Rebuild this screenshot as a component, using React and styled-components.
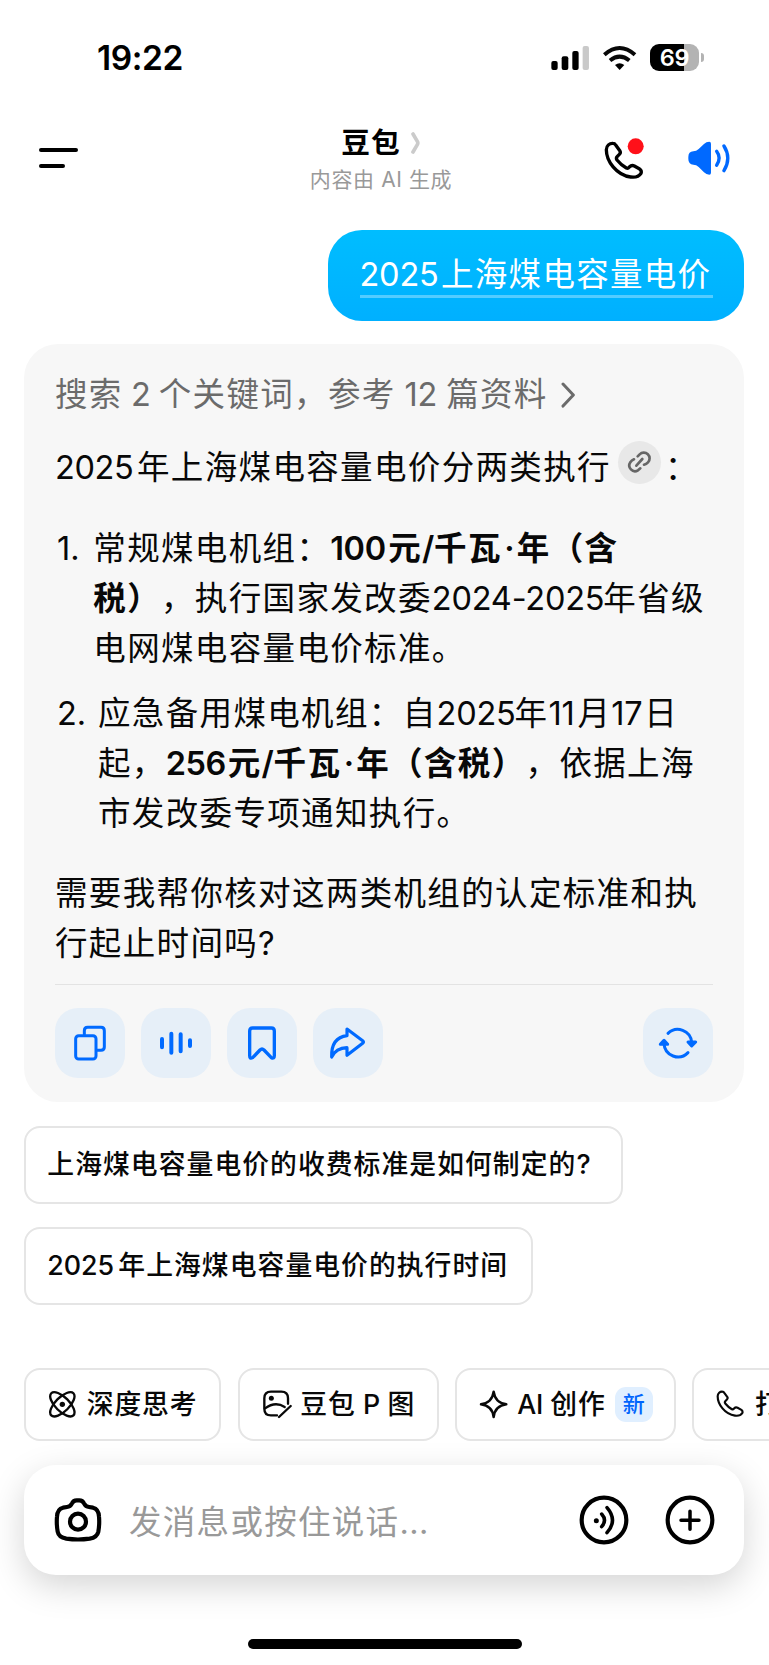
import React from "react";
import styled, { createGlobalStyle } from "styled-components";

const Global = createGlobalStyle`
  * { box-sizing: border-box; }
  body { margin: 0; background: #fff; }
  svg { display: block; flex: none; }
`;

const Screen = styled.main`
  width: 769px;
  height: 1665px;
  overflow: hidden;
  background: #fff;
  color: #080808;
  font-family: Inter, "Noto Sans CJK SC", sans-serif;
  display: flex;
  flex-direction: column;
`;

const StatusBar = styled.header`
  height: 115px;
  padding: 0 65.5px 0 97px;
  display: flex;
  justify-content: space-between;
  align-items: center;
`;

const Clock = styled.time`
  font-size: 33.5px;
  line-height: 40px;
  font-weight: 600;
  letter-spacing: -0.4px;
  color: #000;
`;

const StatusIcons = styled.div`
  display: flex;
  align-items: center;
  gap: 13.3px;
`;

const Battery = styled.div`
  display: flex;
  align-items: center;
  gap: 1.5px;
`;

const BatteryBody = styled.div`
  width: 49px;
  height: 27px;
  border-radius: 9px;
  background: linear-gradient(90deg, #000 69.5%, #b3b3b3 69.5%);
  color: #fff;
  font-size: 23.5px;
  font-weight: 600;
  line-height: 27px;
  text-align: center;
  letter-spacing: -0.3px;
`;

const BatteryNub = styled.div`
  width: 3px;
  height: 9px;
  border-radius: 0 4px 4px 0;
  background: #b3b3b3;
`;

const NavBar = styled.nav`
  height: 115px;
  padding: 0 39px 0 39px;
  display: grid;
  grid-template-columns: 171px 1fr 171px;
`;

const MenuButton = styled.div`
  display: flex;
  flex-direction: column;
  gap: 11.5px;
  padding-top: 33.3px;
`;

const MenuLine = styled.span`
  width: ${(p) => p.$w}px;
  height: 4.2px;
  border-radius: 3px;
  background: #000;
`;

const TitleBlock = styled.div`
  display: flex;
  flex-direction: column;
  align-items: center;
  padding: 10px 7px 0 0;
`;

const Title = styled.h1`
  margin: 0;
  display: flex;
  align-items: center;
  font-size: 28.7px;
  line-height: 36px;
  font-weight: 700;
  letter-spacing: 1px;
  gap: 10px;
  color: #000;
`;

const Subtitle = styled.div`
  margin-top: 4px;
  font-size: 21px;
  line-height: 30px;
  letter-spacing: 0.6px;
  color: #999;
  white-space: nowrap;
`;

const NavActions = styled.div`
  display: flex;
  justify-content: flex-end;
  align-items: flex-start;
  gap: 41.5px;
  padding-top: 23px;
`;

const Bubble = styled.div`
  align-self: flex-end;
  flex: none;
  margin-right: 25px;
  width: 416px;
  height: 90.5px;
  padding: 20px 31.5px 0;
  border-radius: 34px;
  background: linear-gradient(#00bdff, #00b0ff);
  color: #fff;
`;

const BubbleText = styled.div`
  height: 48px;
  border-bottom: 3px solid rgba(255, 255, 255, 0.33);
  font-size: 32.5px;
  line-height: 50px;
  letter-spacing: 1.3px;
  white-space: nowrap;
`;

const Card = styled.article`
  flex: none;
  margin: 23.5px 25px 0 24px;
  height: 758px;
  padding: 25.7px 31px 0;
  border-radius: 34px;
  background: #f7f7f7;
`;

const Line = styled.div`
  height: 50px;
  display: flex;
  font-size: 32.5px;
  line-height: 50px;
  letter-spacing: 1.35px;
  white-space: pre;
`;

const SearchLine = styled(Line)`
  color: #6b6b6b;
  align-items: center;
`;

const Latin = styled.span`
  display: inline-block;
  width: ${(p) => p.$w}px;
  text-align: ${(p) => p.$align || "left"};
  letter-spacing: ${(p) => p.$ls ?? -0.2}px;
  white-space: pre;
`;

const Strong = styled.strong`
  font-weight: 600;
`;

const LinkBadge = styled.span`
  width: 43px;
  height: 43px;
  margin: -2px 4px 0 7px;
  border-radius: 50%;
  background: #e8e8e8;
`;

const Paragraph = styled.div`
  margin-top: ${(p) => p.$top}px;
`;

const ListItem = styled.div`
  margin-top: ${(p) => p.$top}px;
  display: grid;
  grid-template-columns: ${(p) => p.$indent}px 1fr;
`;

const Marker = styled(Line)`
  padding-left: 2px;
  letter-spacing: 0;
`;

const Actions = styled.footer`
  margin-top: 14.8px;
  padding-top: 23.5px;
  border-top: 1px solid #e3e3e3;
  display: flex;
  gap: 16px;
`;

const ActionButton = styled.div`
  width: 70px;
  height: 70px;
  border-radius: 23px;
  background: #e6eff8;
  color: #006aff;
  margin-left: ${(p) => (p.$end ? "auto" : 0)};
`;

const Suggestions = styled.section`
  margin: 24px 0 0 24px;
  display: flex;
  flex-direction: column;
  align-items: flex-start;
  gap: 23.5px;
`;

const Suggestion = styled.div`
  width: ${(p) => p.$w}px;
  height: 77.5px;
  padding-left: 21.3px;
  border: 2px solid #e5e5e5;
  border-radius: 16px;
  font-size: 26.8px;
  line-height: 73px;
  font-weight: 500;
  letter-spacing: 1.05px;
  white-space: nowrap;
`;

const Tools = styled.section`
  margin: 63px 0 0 24px;
  display: flex;
  gap: 16.5px;
`;

const Tool = styled.div`
  flex: none;
  width: ${(p) => p.$w}px;
  height: 73.5px;
  padding-left: 22px;
  border: 2px solid #e5e5e5;
  border-radius: 16px;
  display: flex;
  align-items: center;
  font-size: 26.8px;
  line-height: 40px;
  font-weight: 500;
  letter-spacing: 0.9px;
  white-space: pre;
`;

const ToolLabel = styled.span`
  margin-left: ${(p) => p.$gap}px;
`;

const NewTag = styled.span`
  width: 38px;
  height: 35px;
  margin-left: 9px;
  border-radius: 11px;
  background: #e0efff;
  color: #0065fd;
  font-size: 22px;
  line-height: 34px;
  letter-spacing: 0;
  text-align: center;
`;

const Composer = styled.section`
  flex: none;
  margin: 24.2px 25px 0 24px;
  height: 109.5px;
  padding: 0 28.5px 0 29px;
  border-radius: 32px;
  background: #fff;
  box-shadow: 0 11px 34px rgba(0, 0, 0, 0.17);
  display: flex;
  align-items: center;
`;

const Placeholder = styled.div`
  flex: 1;
  margin: 5.5px 0 0 26px;
  color: #999;
  font-size: 32.5px;
  line-height: 50px;
  letter-spacing: 1.3px;
  white-space: nowrap;
`;

const ComposerActions = styled.div`
  display: flex;
  gap: 34px;
`;

const HomeIndicator = styled.div`
  flex: none;
  align-self: center;
  width: 274px;
  height: 10px;
  margin-top: 64px;
  border-radius: 5px;
  background: #000;
`;

function Glyph({ box, width, sw = 8, children, ...rest }) {
  const [, , w, h] = box.split(" ").map(Number);
  return (
    <svg
      viewBox={box}
      width={width}
      height={(width * h) / w}
      fill="none"
      stroke="currentColor"
      strokeWidth={sw}
      strokeLinecap="round"
      strokeLinejoin="round"
      {...rest}
    >
      {children}
    </svg>
  );
}

const Chevron = styled(Glyph)`
  margin-left: 12.5px;
`;

const HANDSET =
  "M662 386 C662 374 672 366 682 367 Q687 367 690 372 L703 390 Q706 395 701 400 L695 406 Q690 411 694 417 Q706 432 722 441 Q727 443 731 438 Q738 431 746 435 L762 444 Q769 449 766 457 Q757 471 735 468 C692 462 662 420 662 386 Z";

export default function App() {
  return (
    <>
      <Global />
      <Screen>
        <StatusBar>
          <Clock>19:22</Clock>
          <StatusIcons>
            <Glyph box="0 0 118 78" width={39.3} stroke="none">
              <rect x="1" y="48" width="19" height="27" rx="6" fill="#000" />
              <rect x="32" y="34" width="20" height="41" rx="6" fill="#000" />
              <rect x="64" y="18" width="19" height="57" rx="6" fill="#000" />
              <rect x="95" y="3" width="19" height="72" rx="6" fill="#c9c9c9" />
            </Glyph>
            <Glyph box="654 72 100 78" width={33.3} sw={12} strokeLinecap="butt">
              <path d="M658 101 Q704 61 750 101" />
              <path d="M675 118.500 Q704 95 733 118.500" />
              <path d="M690 132 Q704 121 718 132 L704 147 Z" fill="#000" stroke="none" />
            </Glyph>
            <Battery>
              <BatteryBody>69</BatteryBody>
              <BatteryNub />
            </Battery>
          </StatusIcons>
        </StatusBar>

        <NavBar>
          <MenuButton>
            <MenuLine $w={39} />
            <MenuLine $w={25.5} />
          </MenuButton>
          <TitleBlock>
            <Title>
              豆包
              <Glyph box="0 0 30 66" width={10} sw={11} color="#cbcbcb">
                <path d="M6 6 L19 28 Q22 33 19 38 L6 60" />
              </Glyph>
            </Title>
            <Subtitle>内容由 AI 生成</Subtitle>
          </TitleBlock>
          <NavActions>
            <Glyph box="655 351 125 126" width={41.7} sw={10} color="#000">
              <path d={HANDSET} />
              <circle cx="750" cy="376" r="24" fill="#ff1019" stroke="none" />
            </Glyph>
            <Glyph box="906 351 130 126" width={43.3} sw={10} color="#0069ff">
              <path
                d="M910 408 Q910 392 925 391 Q934 391 941 384 L957 369 Q964 362 973 362 Q978 362 978 368 V455 Q978 461 973 461 Q964 461 957 454 L941 438 Q934 431 925 431 Q910 430 910 414 Z"
                fill="currentColor"
                stroke="none"
              />
              <path d="M995 391 Q1010 411 995 433" />
              <path d="M1017 375 Q1040 411 1017 449" />
            </Glyph>
          </NavActions>
        </NavBar>

        <Bubble>
          <BubbleText>
            <Latin $w={81.5} $ls={-0.2}>2025</Latin>上海煤电容量电价
          </BubbleText>
        </Bubble>

        <Card>
          <SearchLine>
            搜索<Latin $w={36} $align="center">2</Latin>个关键词，参考
            <Latin $w={50.5} $align="center">12</Latin>篇资料
            <Chevron box="574 120 50 78" width={16.7} sw={9}>
              <path d="M583 126 L614 159 L583 192" />
            </Chevron>
          </SearchLine>

          <Paragraph $top={23}>
            <Line>
              <Latin $w={82} $ls={-0.4}>2025</Latin>年上海煤电容量电价分两类执行
              <LinkBadge>
                <Glyph box="744 300 129 129" width={43} sw={8} color="#666">
                  <path d="M803 346 L809 340 A17 17 0 0 1 834 364 Q829 369 822 371" />
                  <path d="M792 355 Q785 358 781 364 A17 17 0 0 0 804 388 L811 382" />
                  <path d="M799 374 L817 354" />
                </Glyph>
              </LinkBadge>
              <span>：</span>
            </Line>
          </Paragraph>

          <ListItem $top={31} $indent={38.3}>
            <Marker>1.</Marker>
            <div>
              <Line>
                常规煤电机组：
                <Strong>
                  <Latin $w={58} $ls={-0.4}>100</Latin>元<Latin $w={12}>/</Latin>千瓦
                  <Latin $w={15} $align="center">·</Latin>年（含
                </Strong>
              </Line>
              <Line>
                <Strong>税）</Strong>，执行国家发改委<Latin $w={171.5}>2024-2025</Latin>年省级
              </Line>
              <Line>电网煤电容量电价标准。</Line>
            </div>
          </ListItem>

          <ListItem $top={15} $indent={43}>
            <Marker>2.</Marker>
            <div>
              <Line>
                应急备用煤电机组：自<Latin $w={78}>2025</Latin>年<Latin $w={29}>11</Latin>月
                <Latin $w={33}>17</Latin>日
              </Line>
              <Line>
                起，
                <Strong>
                  <Latin $w={62} $ls={-0.4}>256</Latin>元<Latin $w={12}>/</Latin>千瓦
                  <Latin $w={15} $align="center">·</Latin>年（含税）
                </Strong>
                ，依据上海
              </Line>
              <Line>市发改委专项通知执行。</Line>
            </div>
          </ListItem>

          <Paragraph $top={30.5}>
            <Line>需要我帮你核对这两类机组的认定标准和执</Line>
            <Line>行起止时间吗?</Line>
          </Paragraph>

          <Actions>
            <ActionButton>
              <Glyph box="165 115 210 210" width={70} sw={9}>
                <rect x="227" y="198" width="61" height="70" rx="9" />
                <path d="M253 194 V183 Q253 173 263 173 H303 Q313 173 313 183 V232 Q313 242 303 242 H292" />
              </Glyph>
            </ActionButton>
            <ActionButton>
              <Glyph box="423 115 210 210" width={70} sw={12}>
                <path d="M486 208 V233 M514 192 V249 M542 194 V245 M570 212 V229" />
              </Glyph>
            </ActionButton>
            <ActionButton>
              <Glyph box="681 115 210 210" width={70} sw={10}>
                <path d="M749 258 V184 Q749 175 758 175 H814 Q823 175 823 184 V258 Q823 268 814 264 L792 241 Q786 235 780 241 L758 264 Q749 269 749 258 Z" />
              </Glyph>
            </ActionButton>
            <ActionButton>
              <Glyph box="939 115 210 210" width={70} sw={9.5}>
                <path d="M1041 178 L1088 213 Q1093 217 1088 221 L1041 257 V234 Q1008 235 995 262 Q993 204 1041 198 Z" />
              </Glyph>
            </ActionButton>
            <ActionButton $end>
              <Glyph box="822 115 210 210" width={70} sw={9}>
                <path d="M897 191 A42 42 0 0 1 968 218" />
                <path d="M957 249 A42 42 0 0 1 885 222" />
                <path d="M957 217 H980 L968 229 Z" fill="currentColor" />
                <path d="M874 224 H896 L885 212 Z" fill="currentColor" />
              </Glyph>
            </ActionButton>
          </Actions>
        </Card>

        <Suggestions>
          <Suggestion $w={599}>上海煤电容量电价的收费标准是如何制定的?</Suggestion>
          <Suggestion $w={509}>
            <Latin $w={71} $ls={0}>2025</Latin>年上海煤电容量电价的执行时间
          </Suggestion>
        </Suggestions>

        <Tools>
          <Tool $w={197}>
            <Glyph box="145 122 86 86" width={28.7} sw={7}>
              <ellipse cx="188" cy="165" rx="47" ry="21" transform="rotate(45 188 165)" />
              <ellipse cx="188" cy="165" rx="47" ry="21" transform="rotate(-45 188 165)" />
              <circle cx="188" cy="165" r="8" fill="currentColor" stroke="none" />
            </Glyph>
            <ToolLabel $gap={10}>深度思考</ToolLabel>
          </Tool>
          <Tool $w={201}>
            <Glyph box="786 122 92 92" width={30.7} sw={7}>
              <path d="M864 166 V150 Q864 130 844 130 H813 Q793 130 793 150 V181 Q793 201 813 201 H831" />
              <path d="M795 180 Q826 158 854 176" />
              <path d="M837 206 L872 173" />
              <circle cx="814" cy="150" r="7.500" fill="currentColor" stroke="none" />
            </Glyph>
            <ToolLabel $gap={8}>
              豆包<Latin $w={32} $align="center">P</Latin>图
            </ToolLabel>
          </Tool>
          <Tool $w={220.5}>
            <Glyph box="330 122 88 88" width={29.3} sw={7.5}>
              <path d="M374 127 C377 150 389 162 412 165 C389 168 377 180 374 203 C371 180 359 168 336 165 C359 162 371 150 374 127 Z" />
            </Glyph>
            <ToolLabel $gap={9}>
              <Latin $w={33}>AI </Latin>创作
            </ToolLabel>
            <NewTag>新</NewTag>
          </Tool>
          <Tool $w={220}>
            <Glyph box="655 360 118 118" width={28} sw={9}>
              <path d={HANDSET} />
            </Glyph>
            <ToolLabel $gap={11}>打电话</ToolLabel>
          </Tool>
        </Tools>

        <Composer>
          <Glyph box="160 435 150 150" width={50} sw={12.5} color="#000">
            <path d="M217 460 Q221 451 231 451 H239 Q249 451 253 460 Q258 470 268 471 L280 473 Q297 477 298 500 Q300 522 296 545 Q292 562 270 566 Q235 571 200 566 Q177 562 174 545 Q170 522 172 500 Q173 477 190 473 L202 471 Q212 470 217 460 Z" />
            <circle cx="235" cy="515" r="24" />
          </Glyph>
          <Placeholder>发消息或按住说话<Latin $w={40} $ls={0.4}>...</Latin></Placeholder>
          <ComposerActions>
            <Glyph box="626 432 156 156" width={52} sw={12.5} color="#000">
              <circle cx="704" cy="510" r="67" />
              <circle cx="681" cy="512" r="7.500" fill="currentColor" stroke="none" />
              <path d="M697 492 Q714 511 697 530 M713 473 Q746 511 713 548" strokeWidth="10.5" />
            </Glyph>
            <Glyph box="884 432 156 156" width={52} sw={12.5} color="#000">
              <circle cx="962" cy="510" r="67" />
              <path d="M962 484 V538 M935 511 H989" strokeWidth="10.5" />
            </Glyph>
          </ComposerActions>
        </Composer>
        <HomeIndicator />
      </Screen>
    </>
  );
}
